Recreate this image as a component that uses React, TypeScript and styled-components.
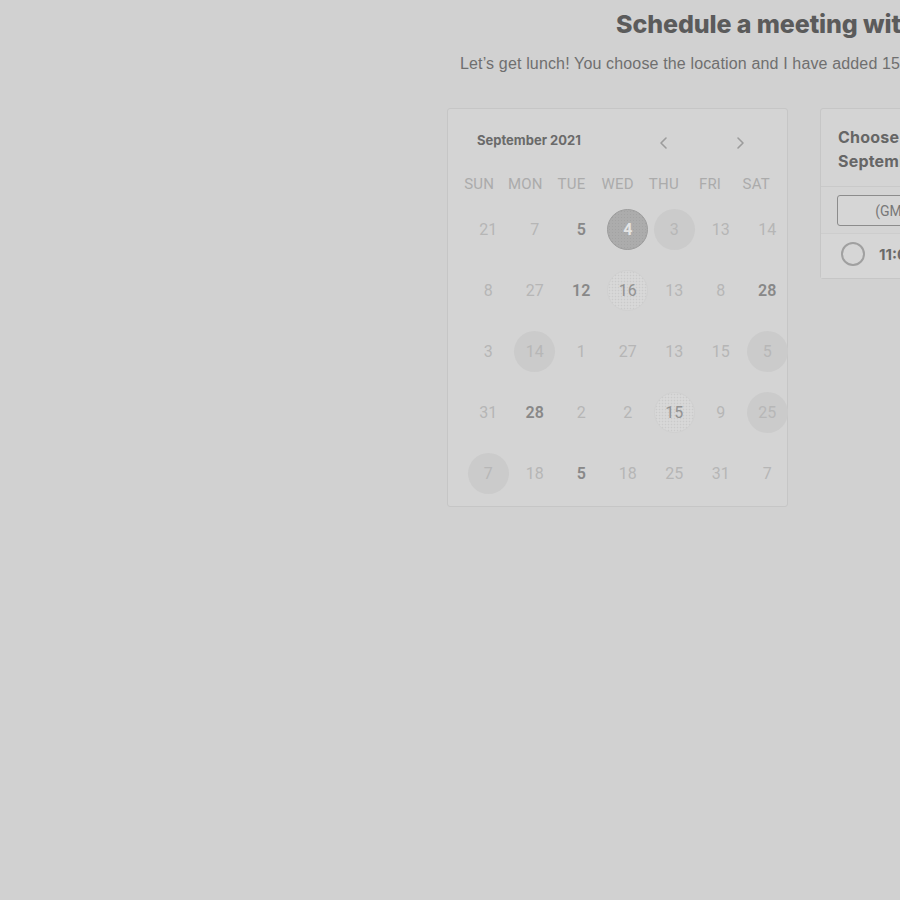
import React from "react";
import styled, { createGlobalStyle, css } from "styled-components";

const GlobalStyle = createGlobalStyle`
  html, body { margin: 0; padding: 0; background: #d1d1d1; overflow: hidden; }
  body { font-family: Roboto, "Liberation Sans", sans-serif; }
`;

const Page = styled.div`
  width: 900px;
  height: 900px;
  overflow: hidden;
  padding: 10px 0 0 447px;
  box-sizing: border-box;
`;

const Inner = styled.div`
  width: 900px;
`;

const Title = styled.h1`
  margin: 0 0 0 169px;
  font-family: Inter, "Liberation Sans", sans-serif;
  font-weight: 800;
  font-size: 25px;
  line-height: 28px;
  color: #5b5b5b;
  letter-spacing: -0.1px;
  white-space: nowrap;
`;

const Subtitle = styled.p`
  margin: 17px 0 0 13px;
  font-family: "Liberation Sans", Arial, sans-serif;
  font-size: 16px;
  line-height: 18px;
  letter-spacing: 0.15px;
  color: #6f6f6f;
  white-space: nowrap;
`;

const Content = styled.div`
  display: flex;
  align-items: flex-start;
  gap: 32px;
  margin-top: 35px;
`;

const CalendarCard = styled.div`
  width: 341px;
  height: 399px;
  box-sizing: border-box;
  border: 1px solid #c6c6c6;
  border-radius: 3px;
  background: #d4d4d4;
  padding-top: 19px;
`;

const CalHeader = styled.div`
  display: flex;
  align-items: center;
  height: 24px;
  padding: 0 35px 0 29px;
`;

const Month = styled.div`
  font-family: Inter, "Liberation Sans", sans-serif;
  font-weight: 700;
  font-size: 13px;
  color: #6a6a6a;
`;

const Nav = styled.div`
  margin-left: auto;
  display: flex;
  gap: 52px;
  padding-top: 6px;
`;

const NavButton = styled.button`
  width: 24px;
  height: 24px;
  border: 0;
  background: transparent;
  padding: 0;
  display: flex;
  align-items: center;
  justify-content: center;
  color: #9c9c9c;
`;

const Weekdays = styled.div`
  display: grid;
  grid-template-columns: repeat(7, 46.2px);
  margin-top: 20px;
  padding-left: 8px;
  height: 24px;
  align-items: center;
`;

const Weekday = styled.div`
  text-align: center;
  font-size: 15px;
  color: #ababab;
  letter-spacing: 0.2px;
`;

const Days = styled.div`
  display: grid;
  grid-template-columns: repeat(7, 46.5px);
  row-gap: 20px;
  margin-top: 13px;
  padding-left: 17px;
`;

type Variant = "plain" | "bold" | "selected" | "soft" | "dotted";

const DayCell = styled.div`
  display: flex;
  align-items: center;
  justify-content: center;
  height: 41px;
`;

const DayCircle = styled.div<{ $v: Variant }>`
  width: 41px;
  height: 41px;
  border-radius: 50%;
  display: flex;
  align-items: center;
  justify-content: center;
  box-sizing: border-box;
  font-size: 16px;
  color: #b6b6b6;
  ${(p) =>
    p.$v === "bold" &&
    css`
      color: #888;
      font-weight: 600;
    `}
  ${(p) =>
    p.$v === "soft" &&
    css`
      background: #cbcbcb;
      color: #b7b7b7;
    `}
  ${(p) =>
    p.$v === "selected" &&
    css`
      background: radial-gradient(circle, #a3a3a3 0.6px, transparent 1px) 0 0 / 3px 3px, #acacac;
      border: 1px solid #9d9d9d;
      color: #e4e4e4;
      font-weight: 700;
    `}
  ${(p) =>
    p.$v === "dotted" &&
    css`
      background: radial-gradient(circle, #cacaca 0.7px, transparent 1.1px) 0 0 / 3px 3px, #d8d8d8;
      border: 1px solid #d0d0d0;
      color: #929292;
    `}
`;

const SidePanel = styled.div`
  width: 360px;
  border: 1px solid #c6c6c6;
  border-radius: 3px;
  background: #d4d4d4;
  box-sizing: border-box;
`;

const PanelHeader = styled.div`
  padding: 16px 17px 13px;
  border-bottom: 1px solid #c9c9c9;
  font-family: Inter, "Liberation Sans", sans-serif;
  font-weight: 700;
  font-size: 16px;
  line-height: 24px;
  letter-spacing: 0.2px;
  color: #666;
`;

const TzWrap = styled.div`
  padding: 8px 17px 7px 16px;
  border-bottom: 1px solid #cdcdcd;
`;

const TzBox = styled.div`
  height: 31px;
  border: 1px solid #8c8c8c;
  border-radius: 3px;
  background: #d6d6d6;
  display: flex;
  align-items: center;
  justify-content: center;
  font-size: 14px;
  color: #787878;
  box-sizing: border-box;
  white-space: nowrap;
`;

const SlotRow = styled.div`
  display: flex;
  align-items: center;
  gap: 14px;
  padding: 8px 17px 12px 20px;
  background: #d6d6d6;
`;

const Radio = styled.span`
  width: 24px;
  height: 24px;
  border-radius: 50%;
  border: 2px solid #a0a0a0;
  box-sizing: border-box;
  flex: none;
`;

const SlotText = styled.span`
  font-family: Inter, "Liberation Sans", sans-serif;
  font-weight: 700;
  font-size: 15px;
  color: #6a6a6a;
`;

const weekdays = ["SUN", "MON", "TUE", "WED", "THU", "FRI", "SAT"];

const days: [string, Variant][] = [
  ["21", "plain"], ["7", "plain"], ["5", "bold"], ["4", "selected"], ["3", "soft"], ["13", "plain"], ["14", "plain"],
  ["8", "plain"], ["27", "plain"], ["12", "bold"], ["16", "dotted"], ["13", "plain"], ["8", "plain"], ["28", "bold"],
  ["3", "plain"], ["14", "soft"], ["1", "plain"], ["27", "plain"], ["13", "plain"], ["15", "plain"], ["5", "soft"],
  ["31", "plain"], ["28", "bold"], ["2", "plain"], ["2", "plain"], ["15", "dotted"], ["9", "plain"], ["25", "soft"],
  ["7", "soft"], ["18", "plain"], ["5", "bold"], ["18", "plain"], ["25", "plain"], ["31", "plain"], ["7", "plain"],
];

const Chevron = ({ dir }: { dir: "left" | "right" }) => (
  <svg width="12" height="14" viewBox="0 0 12 14" fill="none" stroke="currentColor" strokeWidth="1.6" strokeLinecap="round" strokeLinejoin="round">
    {dir === "left" ? <polyline points="8,2 3,7 8,12" /> : <polyline points="4,2 9,7 4,12" />}
  </svg>
);

export default function App() {
  return (
    <>
      <GlobalStyle />
      <Page>
        <Inner>
          <Title>Schedule a meeting with Jane Cooper</Title>
          <Subtitle>
            Let’s get lunch! You choose the location and I have added 15 minutes of travel time.
          </Subtitle>
          <Content>
            <CalendarCard>
              <CalHeader>
                <Month>September 2021</Month>
                <Nav>
                  <NavButton aria-label="Previous month">
                    <Chevron dir="left" />
                  </NavButton>
                  <NavButton aria-label="Next month">
                    <Chevron dir="right" />
                  </NavButton>
                </Nav>
              </CalHeader>
              <Weekdays>
                {weekdays.map((d) => (
                  <Weekday key={d}>{d}</Weekday>
                ))}
              </Weekdays>
              <Days>
                {days.map(([n, v], i) => (
                  <DayCell key={i}>
                    <DayCircle $v={v}>{n}</DayCircle>
                  </DayCell>
                ))}
              </Days>
            </CalendarCard>
            <SidePanel>
              <PanelHeader>
                Choose a time on Saturday,
                <br />
                September 4, 2021
              </PanelHeader>
              <TzWrap>
                <TzBox>(GMT-07:00) Pacific Time - US &amp; Canada</TzBox>
              </TzWrap>
              <SlotRow>
                <Radio />
                <SlotText>11:00 AM</SlotText>
              </SlotRow>
            </SidePanel>
          </Content>
        </Inner>
      </Page>
    </>
  );
}
